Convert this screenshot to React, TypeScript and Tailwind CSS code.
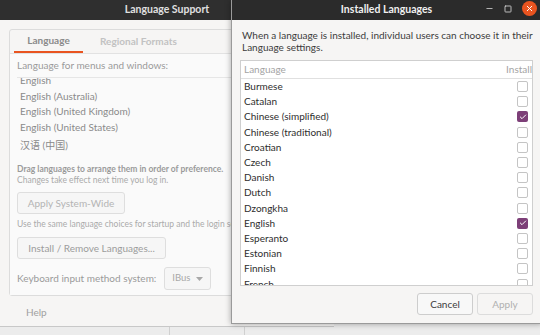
import { Minus, Square, X, Check } from "lucide-react";

const font = { fontFamily: 'Lato, "Noto Sans CJK SC", sans-serif' };

const langs = [
  { name: "Burmese", on: false },
  { name: "Catalan", on: false },
  { name: "Chinese (simplified)", on: true },
  { name: "Chinese (traditional)", on: false },
  { name: "Croatian", on: false },
  { name: "Czech", on: false },
  { name: "Danish", on: false },
  { name: "Dutch", on: false },
  { name: "Dzongkha", on: false },
  { name: "English", on: true },
  { name: "Esperanto", on: false },
  { name: "Estonian", on: false },
  { name: "Finnish", on: false },
  { name: "French", on: false },
];

function LanguageSupport() {
  return (
    <div className="w-[334px] h-[327px] flex flex-col bg-[#f6f5f4] border-b border-[#c8c8c8]">
      {/* title bar */}
      <div className="h-[20px] bg-[#2f2f2f] flex items-center justify-center text-[10.5px] font-bold text-[#e0e0e0]">
        Language Support
      </div>

      <div className="flex-1 flex flex-col px-[9px] pt-[9px]">
        <div className="h-[267px] border border-[#dcdcdc] rounded-[3px] flex flex-col">
          {/* tabs */}
          <div className="h-[24px] flex items-stretch border-b border-[#e2e2e2] px-[4px]">
            <div className="w-[69px] flex items-center justify-center text-[10px] font-bold text-[#8a8a8a] border-b-2 border-[#e95420]">
              Language
            </div>
            <div className="ml-[17px] flex items-center text-[10px] font-bold text-[#c2c2c2]">
              Regional Formats
            </div>
          </div>

          <div className="flex-1 bg-[#fafafa] flex flex-col px-[7px] text-[#8c8c8c] whitespace-nowrap">
            <div className="h-[24px] flex items-center text-[10px] text-[#9a9a9a] border-b border-[#e6e6e6]">
              Language for menus and windows:
            </div>
            <div className="h-[77px] overflow-hidden flex flex-col px-[3px] text-[10px] text-[#8a8a8a]">
              <div className="h-[15.5px] leading-[15.5px] -mt-[5px]">English</div>
              <div className="h-[15.5px] leading-[15.5px]">English (Australia)</div>
              <div className="h-[15.5px] leading-[15.5px]">English (United Kingdom)</div>
              <div className="h-[15.5px] leading-[15.5px]">English (United States)</div>
              <div className="h-[18px] leading-[18px] mt-[1px]">汉语 (中国)</div>
            </div>

            <div className="mt-[9px] text-[8.5px] leading-[11px] font-bold text-[#9a9a9a]">
              Drag languages to arrange them in order of preference.
            </div>
            <div className="text-[8.5px] leading-[10px] text-[#aaaaaa]">
              Changes take effect next time you log in.
            </div>

            <div className="mt-[7px] w-[108px] h-[22px] border border-[#dedede] rounded-[3px] bg-[#f6f6f6] flex items-center justify-center text-[10px] text-[#b4b4b4]">
              Apply System-Wide
            </div>
            <div className="mt-[4px] text-[8.5px] leading-[12px] text-[#aaaaaa]">
              Use the same language choices for startup and the login screen.
            </div>

            <div className="mt-[7px] w-[149px] h-[22px] border border-[#dedede] rounded-[3px] bg-[#f6f6f6] flex items-center justify-center text-[10px] text-[#9c9c9c]">
              Install / Remove Languages...
            </div>

            <div className="mt-[8px] flex items-center gap-[8px]">
              <span className="text-[10px] text-[#9a9a9a]">Keyboard input method system:</span>
              <div className="w-[47px] h-[23px] border border-[#dedede] rounded-[3px] bg-[#f6f6f6] flex items-center justify-center gap-[6px] text-[9.5px] text-[#a8a8a8]">
                IBus
                <svg width="7" height="4" viewBox="0 0 7 4">
                  <path d="M0 0h7L3.5 4z" fill="#a8a8a8" />
                </svg>
              </div>
            </div>
          </div>
        </div>

        <div className="mt-[9px] pl-[17px] text-[10px] text-[#a0a0a0]">Help</div>
      </div>
    </div>
  );
}

function InstalledLanguages() {
  return (
    <div className="absolute left-[231px] top-0 w-[311px] h-[324px] bg-[#f6f5f4] flex flex-col shadow-[0_0_6px_rgba(0,0,0,0.35)] border border-[#9a9a9a] border-t-0">
      <div className="h-[20px] bg-[#2b2b2b] relative flex items-center justify-center text-[10.5px] font-bold text-[#f0f0f0]">
        Installed Languages
        <div className="absolute right-[4px] top-[1px] flex items-center gap-[10px]">
          <Minus size={9} strokeWidth={2} color="#e0e0e0" />
          <Square size={8} strokeWidth={2.4} color="#e0e0e0" />
          <div className="w-[15px] h-[15px] rounded-full bg-[#e95420] flex items-center justify-center">
            <X size={9} strokeWidth={2.6} color="#ffffff" />
          </div>
        </div>
      </div>

      <div className="flex-1 flex flex-col px-[8px]">
        <div className="mt-[9px] pl-[2px] text-[10px] leading-[12px] text-[#3c3c3c] whitespace-nowrap">
          When a language is installed, individual users can choose it in their
          <br />
          Language settings.
        </div>

        <div className="mt-[7px] h-[226px] border border-[#cfcfcf] bg-white flex flex-col overflow-hidden">
          <div className="h-[18px] shrink-0 flex items-center justify-between pl-[3px] text-[10px] text-[#a4a4a4] border-b border-[#e0e0e0]">
            <span>Language</span>
            <span>Install</span>
          </div>
          <div className="flex flex-col">
            {langs.map((l) => (
              <div key={l.name} className="h-[15.2px] shrink-0 flex items-center justify-between pl-[3px] pr-[4px] text-[10px] text-[#2e2e2e]">
                <span>{l.name}</span>
                {l.on ? (
                  <div className="w-[11px] h-[11px] rounded-[2px] bg-[#7d3f78] flex items-center justify-center">
                    <Check size={8} strokeWidth={3} color="#ffffff" />
                  </div>
                ) : (
                  <div className="w-[11px] h-[11px] rounded-[2px] border border-[#c4c4c4] bg-white" />
                )}
              </div>
            ))}
          </div>
        </div>

        <div className="mt-auto mb-[8px] flex justify-end gap-[4px]">
          <div className="w-[56px] h-[22px] border border-[#cdcdcd] rounded-[3px] bg-[#f8f8f8] flex items-center justify-center text-[10px] text-[#3c3c3c]">
            Cancel
          </div>
          <div className="w-[56px] h-[22px] border border-[#dcdcdc] rounded-[3px] bg-[#f6f5f4] flex items-center justify-center text-[10px] text-[#b0b0b0]">
            Apply
          </div>
        </div>
      </div>
    </div>
  );
}

export default function App() {
  return (
    <div className="relative w-[540px] h-[335px] overflow-hidden bg-[#ececec]" style={font}>
      <LanguageSupport />
      <div className="h-[8px] flex">
        <div className="w-[170px] border-r border-[#d0d0d0]" />
        <div className="w-[75px] border-r border-[#d0d0d0]" />
      </div>
      <InstalledLanguages />
    </div>
  );
}
